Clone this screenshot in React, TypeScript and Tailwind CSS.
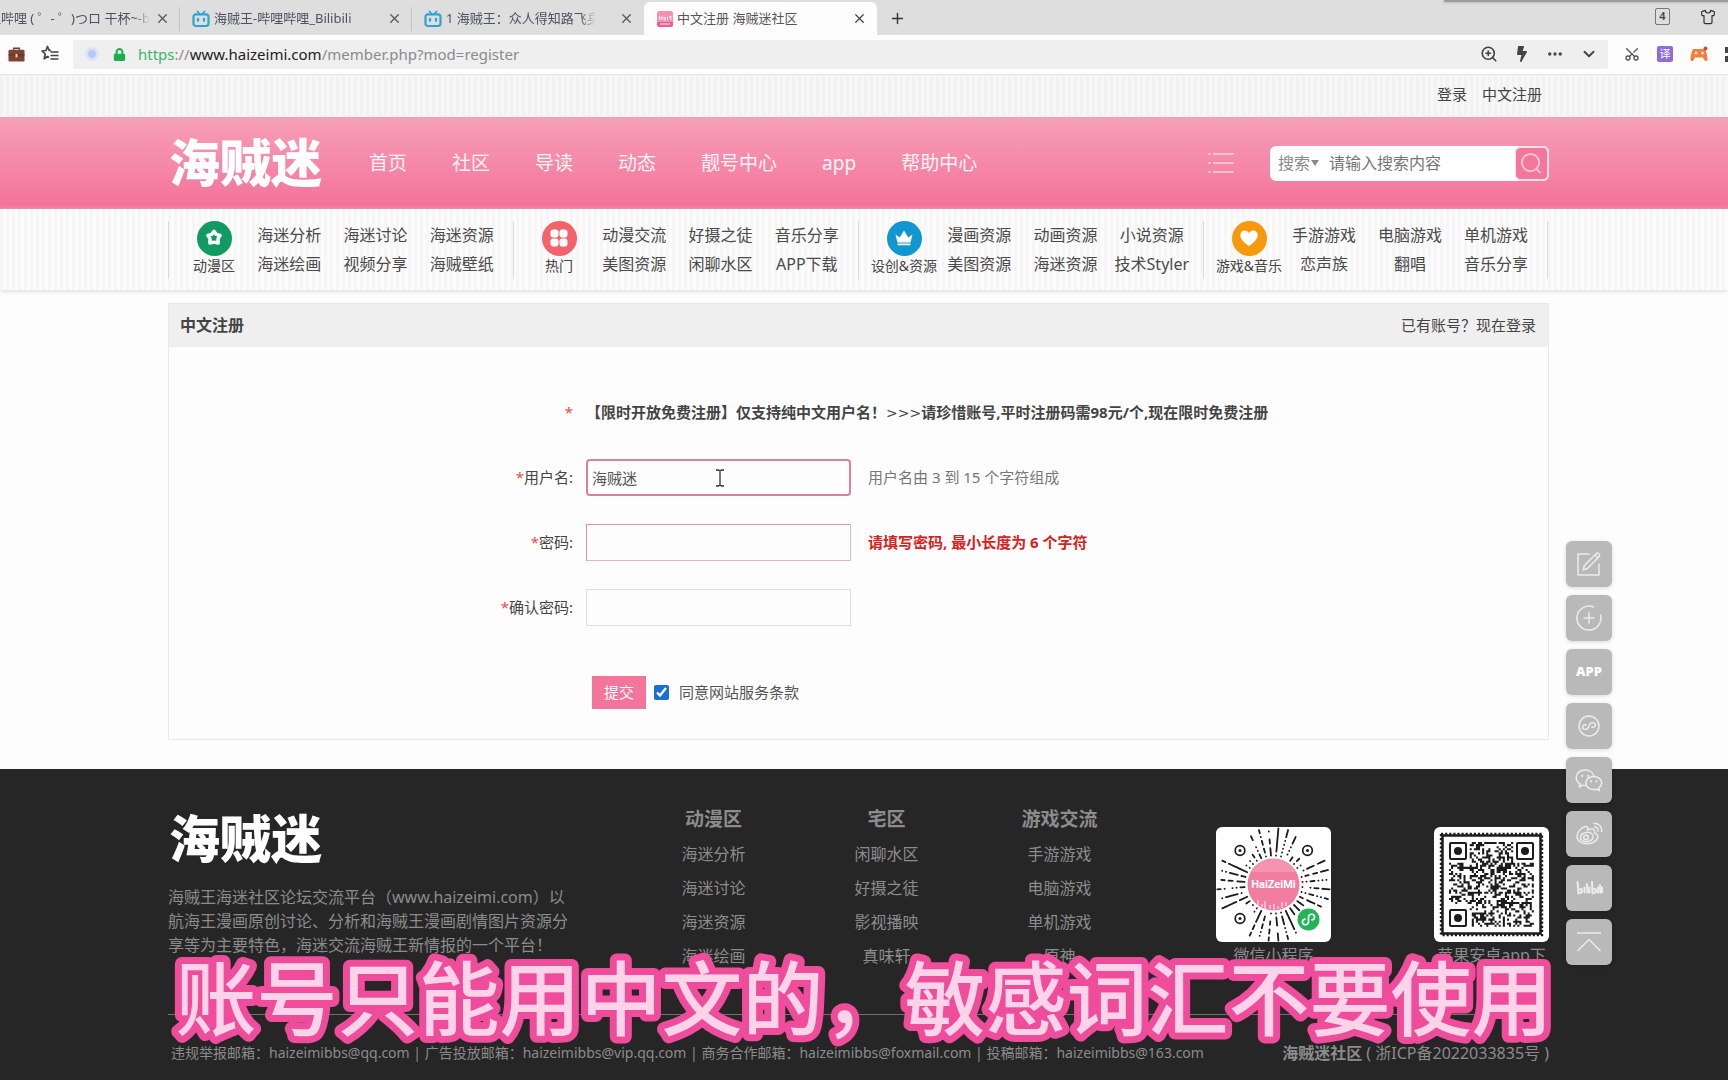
import type { ReactNode } from "react";
import { Scissors, Shirt, X, Plus, ZoomIn, ChevronDown, Ellipsis } from "lucide-react";
import { FaBolt, FaLock } from "react-icons/fa";

const navLinks = ["首页", "社区", "导读", "动态", "靓号中心", "app", "帮助中心"];

const channels = [
    {
        name: "动漫区",
        color: "bg-[#0f9b62]",
        icon: <PentagonIcon />,
        links: ["海迷分析", "海迷讨论", "海迷资源", "海迷绘画", "视频分享", "海贼壁纸"],
    },
    {
        name: "热门",
        color: "bg-[#f2636b]",
        icon: <CloverIcon />,
        links: ["动漫交流", "好摄之徒", "音乐分享", "美图资源", "闲聊水区", "APP下载"],
    },
    {
        name: "设创&资源",
        color: "bg-[#1296cf]",
        icon: <CrownIcon />,
        links: ["漫画资源", "动画资源", "小说资源", "美图资源", "海迷资源", "技术Styler"],
    },
    {
        name: "游戏&音乐",
        color: "bg-[#f7990c]",
        icon: <HeartIcon />,
        links: ["手游游戏", "电脑游戏", "单机游戏", "恋声族", "翻唱", "音乐分享"],
    },
];

const footerColumns = [
    { title: "动漫区", links: ["海迷分析", "海迷讨论", "海迷资源", "海迷绘画"] },
    { title: "宅区", links: ["闲聊水区", "好摄之徒", "影视播映", "真味轩"] },
    { title: "游戏交流", links: ["手游游戏", "电脑游戏", "单机游戏", "原神"] },
];

function PentagonIcon() {
    return (
        <svg viewBox="0 0 20 20" className="size-5" fill="none" stroke="#fff" strokeWidth="3.4" strokeLinejoin="round">
            <path d="M10 3.4l2.3 3 3.9 1-2.2 3.3.2 4.3L10 14.200l-4.200.8.2-4.300L3.800 7.400l3.900-1z" />
        </svg>
    );
}

function CloverIcon() {
    return (
        <svg viewBox="0 0 20 20" className="size-5" fill="#fff">
            <rect x="1.500" y="1.500" width="8" height="8" rx="2.800" />
            <rect x="10.500" y="1.500" width="8" height="8" rx="2.800" />
            <rect x="1.500" y="10.500" width="8" height="8" rx="2.800" />
            <rect x="10.500" y="10.500" width="8" height="8" rx="2.800" />
        </svg>
    );
}

function CrownIcon() {
    return (
        <svg viewBox="0 0 20 20" className="size-5" fill="#fff">
            <path d="M1.500 6.500l4.300 3L10 2.500l4.200 7 4.300-3-2 8h-13zM3.600 15.600h12.800v1.600H3.600z" />
        </svg>
    );
}

function HeartIcon() {
    return (
        <svg viewBox="0 0 20 20" className="size-5" fill="#fff">
            <path d="M10 18C6 15 1.300 11.500 1.300 7.200 1.300 4.500 3.300 2.600 5.700 2.600c1.800 0 3.300 1 4.300 2.600 1-1.600 2.500-2.600 4.300-2.600 2.400 0 4.400 1.900 4.400 4.600C18.700 11.500 14 15 10 18z" />
        </svg>
    );
}

function BiliIcon() {
    return (
        <svg viewBox="0 0 18 18" className="size-[18px] shrink-0" fill="none" stroke="#2fa3cf" strokeWidth="2.200" strokeLinecap="round">
            <path d="M5.500 1.500l2.200 2.500M12.500 1.500l-2.200 2.500" strokeWidth="1.800" />
            <rect x="1.500" y="4.300" width="15" height="11.700" rx="2.500" />
            <path d="M6 8.800v2M12 8.800v2" />
        </svg>
    );
}

function SiteIcon() {
    return (
        <svg viewBox="0 0 16 16" className="size-4 shrink-0">
            <rect width="16" height="16" rx="2.500" fill="#f291b2" />
            <path d="M0 11h16v2.500a2.500 2.500 0 0 1-2.500 2.500h-11A2.500 2.500 0 0 1 0 13.500z" fill="#ec5f8d" />
            <path d="M2.500 5v4M5 5v4M2.500 7H5M7 6.500h1.500V9H7zM10.500 6v3M12 5l1 2 1-2v4M3 13h10" stroke="#fde3ec" strokeWidth="1" fill="none" />
        </svg>
    );
}

function BrowserTab({ icon, title }: { icon: ReactNode; title: string }) {
    return (
        <div className="flex h-6 w-[232px] items-center border-r border-[#c4c4c4] pl-3 pr-[9px] nth-3:border-transparent">
            {icon}
            <span className="ml-1 w-[150px] overflow-hidden whitespace-nowrap mask-r-from-90% text-[13px] text-[#4b5261]">{title}</span>
            <button aria-label="关闭标签页" className="ml-auto text-[#555]">
                <X size={15} />
            </button>
        </div>
    );
}

function BrowserBar() {
    return (
        <div>
            <div className="relative flex h-[35px] items-center overflow-hidden bg-[#dedede] pt-[2px]">
                <div className="flex h-6 w-[180px] items-center border-r border-[#c4c4c4] pr-[9px]">
                    <span className="flex w-[150px] justify-end overflow-hidden whitespace-nowrap mask-r-from-90% text-[13px] text-[#4b5261]">哔哩哔哩 ( ゜- ゜)つロ 干杯~-b</span>
                    <button aria-label="关闭标签页" className="ml-auto text-[#555]">
                        <X size={15} />
                    </button>
                </div>
                <BrowserTab icon={<BiliIcon />} title="海贼王-哔哩哔哩_Bilibili" />
                <BrowserTab icon={<BiliIcon />} title="1 海贼王：众人得知路飞身" />
                <div className="flex h-full w-[233px] items-center rounded-t-md bg-[#fdfdfd] pl-[13px] pr-[10px]">
                    <SiteIcon />
                    <span className="ml-1 text-[13px] text-[#555]">中文注册 海贼迷社区</span>
                    <button aria-label="关闭标签页" className="ml-auto text-[#444]">
                        <X size={15} />
                    </button>
                </div>
                <button aria-label="新建标签页" className="ml-3 text-[#333]">
                    <Plus size={17} />
                </button>
                <div className="mb-1 ml-auto flex items-center gap-[30px] pr-3">
                    <span className="flex h-[17px] w-[15px] items-center justify-center rounded-xs border border-[#777] text-[11px] font-semibold text-[#444]">4</span>
                    <Shirt size={16} strokeWidth={1.800} color="#333" />
                </div>
                <div className="absolute right-0 top-0 h-[2px] w-[284px] bg-[#9d9d9d] shadow-[0_0_3px_#999]" />
            </div>
            <div className="flex h-[39px] items-center bg-[#fdfdfd] pb-px pl-2">
                <svg viewBox="0 0 18 18" className="size-[17px]">
                    <path d="M6 4V2.500h6V4" fill="none" stroke="#6d3b2a" strokeWidth="1.600" />
                    <rect x="0.500" y="4" width="17" height="12.500" rx="1.500" fill="#7d4430" />
                    <path d="M.5 9h17v1H.5z" fill="#5a2d20" />
                    <rect x="8" y="8.500" width="2" height="3.500" fill="#f0d8c8" />
                </svg>
                <svg viewBox="0 0 18 18" className="ml-4 size-[18px]" fill="none" stroke="#444" strokeWidth="1.700">
                    <path d="M10 5.500L8.200 5.300 6.500 1.500 5 5.500 1 6l3.200 3-1 4.800 3.300-2.300 1.500 1" strokeLinejoin="round" />
                    <path d="M9.500 7h8M9.500 10.500h8M9.500 14h8" />
                </svg>
                <div className="ml-[14px] flex h-[29px] flex-1 items-center rounded-xs bg-[#efefef] pl-3 pr-[10px]">
                    <span className="flex size-[14px] items-center justify-center rounded-full bg-[#dbe3f8]">
                        <span className="size-2 rounded-full bg-[#b7c9f6]" />
                    </span>
                    <FaLock size={13} color="#1fab52" className="ml-[14px]" />
                    <span className="ml-3 whitespace-nowrap text-[15px] text-[#8b8b8b]">
                        <span className="text-[#37b765]">https</span>://<span className="text-[#222]">www.haizeimi.com</span>/member.php?mod=register
                    </span>
                    <div className="ml-auto flex items-center gap-4 text-[#444]">
                        <ZoomIn size={18} strokeWidth={2.200} />
                        <FaBolt size={16} />
                        <Ellipsis size={18} strokeWidth={2.500} />
                        <ChevronDown size={18} strokeWidth={2.500} />
                    </div>
                </div>
                <div className="flex w-[120px] shrink-0 items-center gap-[17px] overflow-hidden pl-4">
                    <Scissors size={16} color="#555" className="shrink-0 -rotate-90" />
                    <span className="flex size-4 shrink-0 items-center justify-center rounded-xs bg-[#8f6be0] text-[11px] text-white">译</span>
                    <svg viewBox="0 0 18 16" className="h-4 w-[18px] shrink-0">
                        <path d="M3.500 3h11c1.500 0 3 7.500 3 10.500 0 2-2.500 2-3.500 0l-1-2H5l-1 2c-1 2-3.500 2-3.500 0C.5 10.500 2 3 3.500 3z" fill="#ee7f3e" />
                        <path d="M4.500 7h3M6 5.500v3M11 7h3M12.500 5.500v3" stroke="#fff" strokeWidth="1" />
                        <circle cx="15.500" cy="2.500" r="2" fill="#d8433f" />
                    </svg>
                    <span className="grid shrink-0 gap-[3px]">
                        <span className="size-[6px] bg-[#444]" />
                        <span className="size-[6px] bg-[#444]" />
                    </span>
                </div>
            </div>
        </div>
    );
}

function Logo() {
    return <a href="#" className="block pb-[6px] pl-px font-['Noto_Sans_CJK_SC',sans-serif] text-[51px] leading-[46px] font-black text-white">海贼迷</a>;
}

function Header() {
    return (
        <header>
            <div className="border-t border-[#e4e4e4] bg-[repeating-linear-gradient(90deg,#f2f2f2_0_3px,#f7f7f7_3px_6px)] pr-[11px]">
                <div className="mx-auto flex h-[42px] max-w-[1381px] items-center justify-end gap-[15px] pb-[3px] pr-[7px] text-[15px] text-[#444]">
                    <a href="#">登录</a>
                    <a href="#">中文注册</a>
                </div>
            </div>
            <div className="bg-linear-to-b from-[#f69fb9] to-[#f37199] pr-[11px]">
                <div className="mx-auto flex h-[92px] max-w-[1381px] items-center">
                    <Logo />
                    <nav className="ml-[47px] flex gap-[45px] whitespace-nowrap text-[19px] text-white/90">
                        {navLinks.map((link) => (
                            <a key={link} href="#">{link}</a>
                        ))}
                    </nav>
                    <button aria-label="菜单" className="ml-auto">
                        <svg viewBox="0 0 26 24" className="h-6 w-[26px]" stroke="#fbc3d4" strokeWidth="2">
                            <path d="M0 3h3M5 3h21M0 12h3M5 12h21M0 21h3M5 21h21" />
                        </svg>
                    </button>
                    <form className="ml-9 flex h-[35px] w-[279px] items-center rounded-md bg-white pl-2 text-base">
                        <button type="button" className="flex items-center whitespace-nowrap text-[#888]">
                            搜索
                            <svg viewBox="0 0 8 6" className="ml-px h-[6px] w-2" fill="#888"><path d="M0 0h8L4 6z" /></svg>
                        </button>
                        <input aria-label="搜索内容" placeholder="请输入搜索内容" className="ml-[10px] min-w-0 flex-1 bg-transparent outline-none placeholder:text-[#757575]" />
                        <button aria-label="搜索" className="flex h-[35px] w-[34px] items-center justify-center rounded-md border-2 border-l border-[#fde0e9] bg-[#f3769c]">
                            <svg viewBox="0 0 24 24" className="size-[23px]" fill="none" stroke="#fbc6d6" strokeWidth="2">
                                <circle cx="11" cy="11" r="9" />
                                <path d="M17 17.500l4.500 4.500" />
                            </svg>
                        </button>
                    </form>
                </div>
            </div>
            <div className="bg-[repeating-linear-gradient(90deg,#f6f6f6_0_3px,#fcfcfc_3px_6px)] pr-[11px] shadow-[0_1px_5px_#d8d8d8]">
                <div className="mx-auto grid h-[81px] max-w-[1381px] grid-cols-4 items-center pr-px">
                    {channels.map((channel) => (
                        <div key={channel.name} className="flex h-[58px] border-l border-[#dadada] pl-[13px] pr-2 last:border-r">
                            <div className="flex w-16 shrink-0 flex-col items-center whitespace-nowrap text-[#444]">
                                <span className={`flex size-[35px] shrink-0 items-center justify-center rounded-full ${channel.color}`}>{channel.icon}</span>
                                <span className="text-sm leading-5">{channel.name}</span>
                            </div>
                            <div className="grid flex-1 grid-cols-3 whitespace-nowrap text-center text-base leading-7 text-[#4a4a4a]">
                                {channel.links.map((link) => (
                                    <a key={link} href="#">{link}</a>
                                ))}
                            </div>
                        </div>
                    ))}
                </div>
            </div>
        </header>
    );
}

function Field({ id, label, hint, children }: { id: string; label: string; hint?: ReactNode; children: ReactNode }) {
    return (
        <div className="flex items-center text-[15px]">
            <label htmlFor={id} className="w-[404px] text-right text-[#444]">
                <span className="text-[#e0524f]">*</span>
                {label}:
            </label>
            <div className="relative ml-[13px] w-[265px]">{children}</div>
            <div className="ml-[17px]">{hint}</div>
        </div>
    );
}

function RegisterForm() {
    return (
        <main className="mt-[13px] pr-[11px]">
            <section className="mx-auto max-w-[1381px] border border-[#e9e9e9]">
                <div className="flex h-[43px] items-center justify-between bg-[#efefef] pb-px pl-[11px] pr-3">
                    <h1 className="text-base font-bold text-[#444]">中文注册</h1>
                    <a href="#" className="text-[15px] text-[#444]">已有账号？现在登录</a>
                </div>
                <form className="pb-[30px] pt-[54px]">
                    <p className="mb-9 flex text-[15px] leading-[22px]">
                        <span className="w-[404px] text-right text-[#e0524f]">*</span>
                        <strong className="ml-[13px] font-bold text-[#444]">
                            【限时开放免费注册】仅支持纯中文用户名！<span className="font-['DejaVu_Sans'] text-sm leading-none font-normal">&gt;&gt;&gt;</span>请珍惜账号,平时注册码需98元/个,现在限时免费注册
                        </strong>
                    </p>
                    <div className="flex flex-col gap-7">
                        <Field id="username" label="用户名" hint={<span className="text-[#777]">用户名由 3 到 15 个字符组成</span>}>
                            <input id="username" defaultValue="海贼迷" className="h-[37px] w-full rounded-sm border-2 border-[#dc7f9d] px-1 text-[15px] text-[#555] outline-none" />
                            {/* text cursor */}
                            <svg viewBox="0 0 10 18" className="absolute left-[129px] top-[10px] h-[18px] w-[10px]" fill="none" stroke="#333" strokeWidth="1.300">
                                <path d="M1 1h2.500L5 2l1.500-1H9M5 2v14M1 17h2.500L5 16l1.500 1H9" />
                            </svg>
                        </Field>
                        <Field id="password" label="密码" hint={<span className="font-bold text-[#d62220]">请填写密码, 最小长度为 6 个字符</span>}>
                            <input id="password" type="password" className="h-[37px] w-full border border-[#e0b9c1] border-l-[#da97a2] border-t-[#da97a2] px-1 outline-none" />
                        </Field>
                        <Field id="confirm" label="确认密码">
                            <input id="confirm" type="password" className="h-[37px] w-full border border-[#dedede] px-1 outline-none" />
                        </Field>
                    </div>
                    <div className="ml-[423px] mt-[50px] flex items-center text-[15px]">
                        <button type="button" className="h-[33px] w-[54px] bg-[#f3759c] text-white">提交</button>
                        <input id="agree" type="checkbox" defaultChecked className="ml-2 size-[15px] accent-[#1a6fd6]" />
                        <label htmlFor="agree" className="ml-[10px] text-[#555]">同意网站服务条款</label>
                    </div>
                </form>
            </section>
        </main>
    );
}

// small hash so the code patterns are the same on each render
function noise(a: number, b: number) {
    const n = Math.sin(a * 127.1 + b * 311.7) * 43758.5453;
    return n - Math.floor(n);
}

function MiniProgramCode() {
    const spokes = Array.from({ length: 36 }, (_, i) => i * 10);
    return (
        <svg viewBox="0 0 115 115" className="size-[115px] rounded-md bg-white">
            {spokes.map((angle, i) => (
                <g key={angle} transform={`rotate(${angle + 5} 57.5 57.5)`} stroke="#1c1c1c" strokeWidth="1.800" strokeLinecap="round">
                    {[30, 34, 38, 42, 46, 50, 54].map((r, j) => {
                        const corner = Math.abs((angle + 5) % 90 - 45) < 12 && r > 36;
                        if (corner) return null;
                        const length = noise(i, j) > 0.45 ? 3.4 : 0.2;
                        return noise(j + 9, i) > 0.12 && <path key={r} d={`M${57.5 + r - 1} 57.5h${length}`} />;
                    })}
                </g>
            ))}
            {[[24, 23.5], [91.5, 23.5], [24, 91.5]].map(([cx, cy]) => (
                <g key={`${cx}-${cy}`}>
                    <circle cx={cx} cy={cy} r="4.800" fill="#fff" stroke="#1c1c1c" strokeWidth="1.700" />
                    <circle cx={cx} cy={cy} r="1.500" fill="#1c1c1c" />
                </g>
            ))}
            <circle cx="57.500" cy="57.500" r="26" fill="#f17da1" />
            <path d="M35 45a26 26 0 0 1 45 0z" fill="#f593b1" />
            <text x="57.500" y="61" textAnchor="middle" fontSize="11" fontWeight="700" fill="#fff" fontFamily="Roboto, sans-serif">HaiZeiMi</text>
            <path d="M42 78v-5M46 80v-3M49 82v-8M54 82v-4M58 83v-6M62 82v-3M66 81v-6M70 79v-4" stroke="#fbd0de" strokeWidth="1.500" />
            <circle cx="92.500" cy="92.500" r="11" fill="#21b558" />
            <g transform="translate(80.500 80.500)" fill="none" stroke="#fff" strokeWidth="1.600" strokeLinecap="round">
                <path d="M8.500 11.600c-1.600.3-2.600 1.400-2.600 2.700 0 1.700 1.200 2.900 2.900 2.900 1.800 0 3.200-1.300 3.200-3V9.800c0-1.700 1.400-3 3.200-3 1.700 0 2.900 1.200 2.900 2.900 0 1.300-1 2.400-2.600 2.700" />
            </g>
        </svg>
    );
}

function AppCode() {
    const size = 41;
    const cells: string[] = [];
    for (let y = 0; y < size; y++) {
        for (let x = 0; x < size; x++) {
            const finder = (x < 10 && y < 10) || (x > 30 && y < 10) || (x < 10 && y > 30);
            if (!finder && noise(x + 1, y + 3) > 0.54) cells.push(`M${x} ${y}h1v1h-1z`);
        }
    }
    return (
        <svg viewBox="0 0 115 115" className="size-[115px] rounded-md bg-white">
            <rect x="8.500" y="8.500" width="98" height="98" fill="none" stroke="#1c1c1c" strokeWidth="2.500" />
            <rect x="7" y="7" width="101" height="101" fill="none" stroke="#1c1c1c" strokeWidth="2.400" strokeDasharray="2.200 1.900" />
            <g transform="translate(15 15) scale(2.070)">
                <path d={cells.join("")} fill="#1c1c1c" />
            </g>
            {[[15, 15], [82, 15], [15, 82]].map(([x, y]) => (
                <g key={`${x}-${y}`}>
                    <rect x={x + 1} y={y + 1} width="16" height="16" rx="1" fill="#fff" stroke="#1c1c1c" strokeWidth="2" />
                    <circle cx={x + 9} cy={y + 9} r="4" fill="#1c1c1c" />
                </g>
            ))}
        </svg>
    );
}

function Footer() {
    return (
        <footer className="mt-[29px] bg-[#262626] pr-[11px] text-[#8c8c8c]">
            <div className="mx-auto max-w-[1381px] pt-9">
                <div className="flex items-start">
                    <div className="w-[408px] pt-2">
                        <Logo />
                        <p className="mt-5 whitespace-nowrap text-base leading-6">
                            海贼王海迷社区论坛交流平台（www.haizeimi.com）以
                            <br />
                            航海王漫画原创讨论、分析和海贼王漫画剧情图片资源分
                            <br />
                            享等为主要特色，海迷交流海贼王新情报的一个平台！
                        </p>
                    </div>
                    <div className="ml-[51px] flex">
                        {footerColumns.map((column) => (
                            <div key={column.title} className="w-[173px] text-center">
                                <h2 className="text-[19px] leading-7 font-bold">{column.title}</h2>
                                <ul className="mt-1 text-base leading-[34px]">
                                    {column.links.map((link) => (
                                        <li key={link}><a href="#">{link}</a></li>
                                    ))}
                                </ul>
                            </div>
                        ))}
                    </div>
                    <div className="ml-auto mt-[22px] flex gap-[103px] text-center text-base leading-6">
                        <div>
                            <MiniProgramCode />
                            <p className="mt-px">微信小程序</p>
                        </div>
                        <div>
                            <AppCode />
                            <p className="mt-px">苹果安卓app下</p>
                        </div>
                    </div>
                </div>
                <div className="mt-[41px] flex justify-between border-t border-[#707070] pb-[15px] pl-[3px] pt-[26px] leading-6">
                    <p className="text-sm leading-6">违规举报邮箱：haizeimibbs@qq.com | 广告投放邮箱：haizeimibbs@vip.qq.com | 商务合作邮箱：haizeimibbs@foxmail.com | 投稿邮箱：haizeimibbs@163.com</p>
                    <p className="text-base leading-6"><strong>海贼迷社区</strong> ( 浙ICP备2022033835号 )</p>
                </div>
            </div>
        </footer>
    );
}

function SideButton({ label, children }: { label: string; children: ReactNode }) {
    return (
        <button aria-label={label} className="flex size-[46px] items-center justify-center rounded-md bg-[#b9b9b9] text-[#ececec] shadow-[0_1px_4px_rgba(0,0,0,0.15)]">
            {children}
        </button>
    );
}

function SideTools() {
    return (
        <div className="absolute right-[116px] top-[541px] flex flex-col gap-2">
            <SideButton label="发帖">
                <svg viewBox="0 0 26 26" className="size-[26px]" fill="none" stroke="currentColor" strokeWidth="1.500" strokeLinecap="round" strokeLinejoin="round">
                    <path d="M13 3H2v21h21V13" />
                    <path d="M7 19l1.500-4.500L20.500 2.200c1-1 4 1.800 3 3L11.500 17.500zM19 4l3 3" />
                </svg>
            </SideButton>
            <SideButton label="签到">
                <svg viewBox="0 0 26 26" className="size-[26px]" fill="none" stroke="currentColor" strokeWidth="1.500" strokeLinecap="round">
                    <path d="M17.500 2A12 12 0 1 0 24.500 10M13 8v10M8 13h10" />
                </svg>
            </SideButton>
            <SideButton label="APP">
                <span className="text-[13px] font-black text-white">APP</span>
            </SideButton>
            <SideButton label="小程序">
                <svg viewBox="0 0 24 24" className="size-6" fill="none" stroke="currentColor" strokeWidth="1.500" strokeLinecap="round">
                    <circle cx="12" cy="12" r="10" />
                    <g transform="rotate(18 12 12)">
                        <path d="M9 12c-1.700 0-2.800 1-2.800 2.300 0 1.400 1.200 2.300 2.600 2.300 1.700 0 2.900-1.300 3-3l.4-3.200c.1-1.700 1.300-3 3-3 1.400 0 2.600.9 2.600 2.300 0 1.300-1.100 2.300-2.800 2.300" />
                    </g>
                </svg>
            </SideButton>
            <SideButton label="微信">
                <svg viewBox="0 0 28 24" className="h-6 w-7" fill="none" stroke="currentColor" strokeWidth="1.500" strokeLinejoin="round" strokeLinecap="round">
                    <path d="M10.500 17.500c-1.200 0-2-.1-3-.4l-3.300 2 .8-3.200C2.700 14.400 1.200 12.200 1.200 9.700c0-4.500 4-7.700 9-7.700 4.400 0 8 2.600 8.700 6.200" />
                    <path d="M18.800 8.500c4.300 0 7.900 2.900 7.900 6.600 0 2.100-1.100 3.800-2.900 5.100l.6 2.500-2.600-1.500c-1 .3-2 .4-3 .4-4.400 0-8-2.900-8-6.500s3.600-6.600 8-6.600z" />
                    <path d="M7.200 7.800v.1M13.200 7.800v.1M16.200 13.300v.1M21.400 13.300v.1" strokeWidth="2.200" />
                </svg>
            </SideButton>
            <SideButton label="微博">
                <svg viewBox="0 0 27 24" className="h-6 w-[27px]" fill="none" stroke="currentColor" strokeWidth="1.500" strokeLinejoin="round" strokeLinecap="round">
                    <path d="M11.500 7.500c.8-2-.3-3.500-2.500-3C5 5.500 1 10.500 1 14.500 1 18.800 5.500 21.800 11 21.800c6 0 10.800-3.600 10.800-7.300 0-2-1.300-3-3.300-3.600.8-2-.1-3.600-2.300-3.800-1.500-.1-3.200.2-4.700.9" />
                    <ellipse cx="10.800" cy="15" rx="6.500" ry="4.600" transform="rotate(-8 10.800 15)" />
                    <circle cx="10" cy="15.500" r="2.300" />
                    <path d="M18 1.500c4.500-.8 8.500 3.200 7.500 8M18.500 5c2.300-.3 4 1.500 3.500 4" />
                </svg>
            </SideButton>
            <SideButton label="哔哩哔哩">
                <svg viewBox="0 0 27 14" className="h-[14px] w-[27px]" fill="none" stroke="currentColor" strokeWidth="2" strokeLinecap="round" strokeLinejoin="round">
                    <path d="M1.500 1l1 11.500 3.500-1.500-.5-3-3 .5M8.500 6.500v5M11 3l.5 8.500M13.500 6.500v5M16 1l.5 11.500 3.500-1.500-.5-3-3 .5M22 6.500v5M24 4l.3 7.500M26 6.500v5" />
                </svg>
            </SideButton>
            <SideButton label="返回顶部">
                <svg viewBox="0 0 26 22" className="h-[22px] w-[26px]" fill="none" stroke="currentColor" strokeWidth="1.500">
                    <path d="M1 2h24M1.500 20L13 8.500 24.500 20" />
                </svg>
            </SideButton>
        </div>
    );
}

// video caption, drawn as svg text for the round outline
function Caption() {
    return (
        <svg className="pointer-events-none absolute inset-x-0 bottom-[21px] h-[120px] w-full overflow-visible font-['Noto_Sans_CJK_SC',sans-serif]">
            <text x="50%" y="90" textAnchor="middle" fontSize="81" fontWeight="500" fill="#fcd3e8" stroke="#ef4d9c" strokeWidth="14" strokeLinejoin="round" paintOrder="stroke">
                账号只能用中文的，敏感词汇不要使用
            </text>
        </svg>
    );
}

export default function App() {
    return (
        <div className="relative min-h-screen overflow-hidden bg-[#fdfdfd] font-['Noto_Sans','Noto_Sans_CJK_SC',sans-serif]">
            <BrowserBar />
            <Header />
            <RegisterForm />
            <Footer />
            <SideTools />
            <Caption />
        </div>
    );
}
